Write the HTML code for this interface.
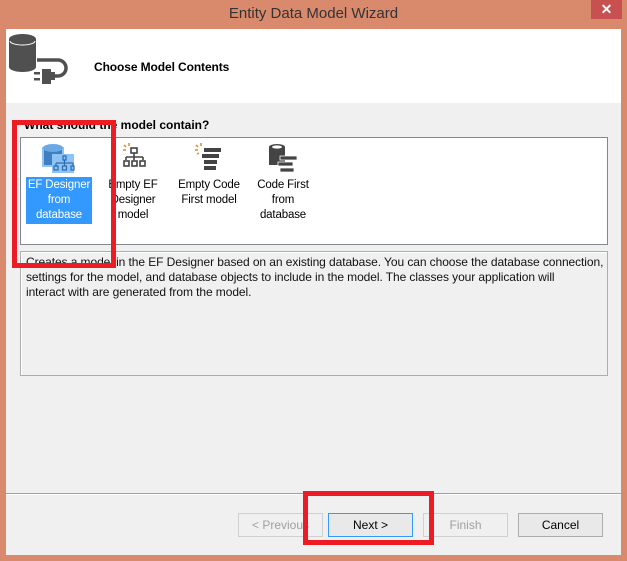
<!DOCTYPE html>
<html><head><style>
*{margin:0;padding:0;box-sizing:border-box}
body{width:627px;height:561px;background:#d98a6c;position:relative;overflow:hidden;font-family:"Liberation Sans",sans-serif;font-size:11.5px;color:#000}
.abs{position:absolute}
.title{left:0;top:5px;width:627px;text-align:center;font-size:15px;color:#333}
.close{left:591px;top:0;width:31px;height:19px;background:#c75050;color:#fff;text-align:center;font-size:14px;line-height:19px;font-weight:bold}
.content{left:6px;top:29px;width:615px;height:526px;background:#f0f0f0}
.header{left:6px;top:29px;width:615px;height:74px;background:#fff}
.lb{left:20px;top:137px;width:588px;height:108px;background:#fff;border:1px solid #828790}
.desc{left:20px;top:251px;width:588px;height:125px;border:1px solid #adadad;box-shadow:inset 1px 1px 0 #fff}
.item{text-align:center;line-height:15px;font-size:11.5px;white-space:nowrap;letter-spacing:-0.15px}
.btn{top:513px;width:85px;height:24px;border:1px solid #adadad;background:#e9e9e9;text-align:center;line-height:22px;font-size:12px}
.red{border:5px solid #ed1c24}
</style></head><body>
<div class="abs title">Entity Data Model Wizard</div>
<div class="abs close">✕</div>
<div class="abs content"></div>
<div class="abs header"></div>
<svg class="abs" style="left:8px;top:33px" width="62" height="56" viewBox="0 0 62 56">
<rect x="1" y="6" width="27" height="28" fill="#505050"/>
<ellipse cx="14.5" cy="6" rx="13.5" ry="5" fill="#505050"/>
<path d="M2 8 a12.5 4 0 0 0 25 0" stroke="#fff" stroke-width="1" fill="none"/>
<ellipse cx="14.5" cy="34" rx="13.5" ry="5" fill="#505050"/>
<path d="M29 27 H50 a8 8 0 0 1 0 16 H46" stroke="#505050" stroke-width="3.5" fill="none"/>
<rect x="34" y="36" width="9" height="15" fill="#505050"/>
<rect x="41" y="39" width="6" height="8" fill="#505050"/>
<rect x="26" y="39" width="6" height="2.5" fill="#505050"/><rect x="26" y="45" width="6" height="2.5" fill="#505050"/>
</svg>
<div class="abs" style="left:94px;top:60px;font-weight:bold;font-size:12px;letter-spacing:-0.1px">Choose Model Contents</div>
<div class="abs" style="left:24px;top:118px;font-weight:bold;font-size:12px">What should the model contain?</div>
<div class="abs lb"></div>
<svg class="abs" style="left:42px;top:142px" width="34" height="32"><rect x="1" y="6" width="20" height="18" fill="#3f7fc0" stroke="#8ec4f5" stroke-width="2"/><ellipse cx="11" cy="6" rx="10" ry="4" fill="#6aa8e8"/><rect x="10" y="12" width="22" height="19" fill="#8ec4f5"/><path d="M21 14h3v4h-3zM22.5 18v3M14 21h17M14 21v3M22.5 21v3M31 21v3M12 24h4v4h-4zM20.5 24h4v4h-4zM29 24h3v4h-3z" stroke="#2d6cb0" stroke-width="1.2" fill="none"/></svg>
<div class="abs item" style="left:26px;top:177px;width:66px;height:47px;background:#3399ff;color:#fff;padding-top:1px">EF Designer<br>from<br>database</div>
<svg class="abs" style="left:122px;top:143px" width="26" height="30"><path d="M2 2l2 2M7 0v3M1 7h3" stroke="#e08a1e" stroke-width="1.5"/><rect x="9" y="5" width="6" height="5" fill="none" stroke="#444" stroke-width="1.6"/><path d="M12 10v4M4 14h17M4 14v3M12 14v3M21 14v3" stroke="#444" stroke-width="1.6"/><rect x="2" y="18" width="5" height="5" fill="none" stroke="#444" stroke-width="1.6"/><rect x="10" y="18" width="5" height="5" fill="none" stroke="#444" stroke-width="1.6"/><rect x="18" y="18" width="5" height="5" fill="none" stroke="#444" stroke-width="1.6"/></svg>
<div class="abs item" style="left:100px;top:178px;width:66px">Empty EF<br>Designer<br>model</div>
<svg class="abs" style="left:194px;top:143px" width="30" height="30"><path d="M2 2l2 2M7 0v3M1 7h3M3 11l2-1" stroke="#e08a1e" stroke-width="1.5"/><path d="M10 5h17v4H10zM8 11h17v4H8zM10 17h13v4H10zM10 23h12v4H10z" fill="#444"/></svg>
<div class="abs item" style="left:172px;top:178px;width:74px">Empty Code<br>First model</div>
<svg class="abs" style="left:268px;top:143px" width="34" height="32"><rect x="1" y="4" width="16" height="18" fill="#444"/><ellipse cx="9" cy="4" rx="8" ry="3" fill="#444"/><ellipse cx="9" cy="4" rx="5" ry="1.6" fill="#fff"/><path d="M12 13h17v4H12zM10 19h15v4H10zM12 25h14v4H12z" fill="#444" stroke="#fff" stroke-width=".8"/></svg>
<div class="abs item" style="left:250px;top:178px;width:66px">Code First<br>from<br>database</div>
<div class="abs desc"></div>
<div class="abs" style="left:26px;top:255px;width:600px;line-height:15px;color:#111;font-size:12px;letter-spacing:-0.08px;white-space:nowrap">Creates a model in the EF Designer based on an existing database. You can choose the database connection,<br>settings for the model, and database objects to include in the model. The classes your application will<br>interact with are generated from the model.</div>
<div class="abs" style="left:6px;top:493px;width:615px;height:1px;background:#a0a0a0"></div>
<div class="abs" style="left:6px;top:494px;width:615px;height:1px;background:#fff"></div>
<div class="abs btn" style="left:238px;color:#a0a0a0;border-color:#d0d0d0;background:#f0f0f0">&lt; Previous</div>
<div class="abs btn" style="left:328px;border-color:#3399ff">Next &gt;</div>
<div class="abs btn" style="left:423px;color:#a0a0a0;border-color:#d0d0d0;background:#f0f0f0">Finish</div>
<div class="abs btn" style="left:518px">Cancel</div>
<div class="abs red" style="left:12px;top:120px;width:104px;height:148px"></div>
<div class="abs red" style="left:303px;top:491px;width:131px;height:54px"></div>
</body></html>
